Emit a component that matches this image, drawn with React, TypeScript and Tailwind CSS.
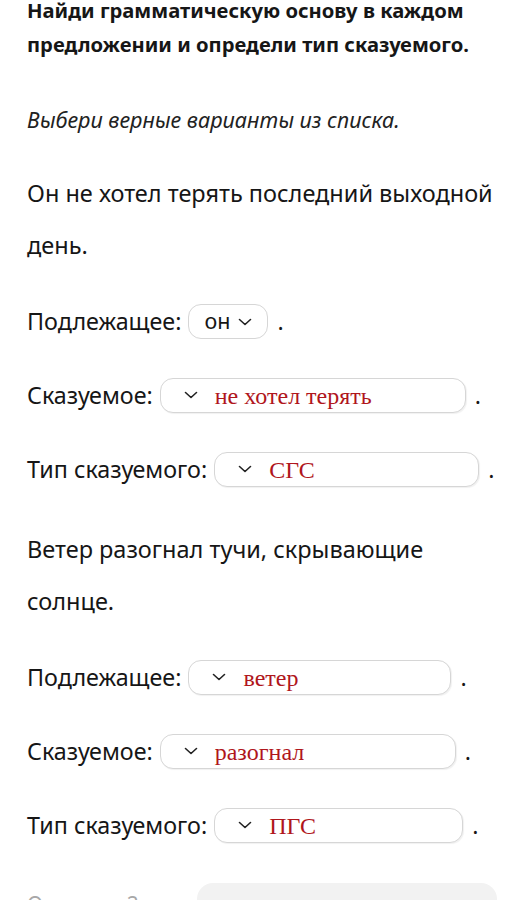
import React from "react";

function Chevron() {
  return (
    <svg width="14" height="8" viewBox="0 0 14 8" fill="none" className="shrink-0">
      <path d="M1.5 1.5 L7 6.5 L12.5 1.5" stroke="#222" strokeWidth="1.6" strokeLinecap="round" strokeLinejoin="round" />
    </svg>
  );
}

function FilledSelect({ value, width }: { value: string; width: number }) {
  return (
    <div
      className="ml-[7px] h-[35px] rounded-[13px] border-[1.5px] border-[#d6d6d6] bg-white flex items-center pl-[23px] shadow-[1px_1px_1px_rgba(0,0,0,0.06)]"
      style={{ width }}
    >
      <Chevron />
      <span className="ml-[17px] font-['Liberation_Serif',serif] text-[24px] leading-none text-[#b0161c] translate-y-[1px]">
        {value}
      </span>
    </div>
  );
}

function Row({ label, children }: { label: string; children: React.ReactNode }) {
  return (
    <div className="h-[74px] flex items-center">
      <span>{label}</span>
      {children}
      <span className="ml-[9px]">.</span>
    </div>
  );
}

export default function App() {
  return (
    <div className="w-[515px] h-[900px] overflow-hidden bg-white pl-[27px] font-['Noto_Sans',sans-serif] text-[#161616]">
      <div className="mt-[-7px] text-[20.2px] font-bold leading-[34px]">
        <div>Найди грамматическую основу в каждом</div>
        <div>предложении и определи тип сказуемого.</div>
      </div>
      <div className="mt-[44px] text-[21.6px] italic leading-[30px] text-[#222]">
        Выбери верные варианты из списка.
      </div>
      <div className="mt-[32px] text-[23.5px] leading-[52px]">
        <div>Он не хотел терять последний выходной</div>
        <div>день.</div>
      </div>
      <div className="mt-[13px] text-[23.3px]">
        <Row label="Подлежащее:">
          <div className="ml-[7px] h-[35px] w-[80px] rounded-[13px] border-[1.5px] border-[#d6d6d6] bg-white flex items-center pl-[15px] text-[21.5px]">
            <span className="leading-none">он</span>
            <span className="ml-[8px] mt-[2px]">
              <Chevron />
            </span>
          </div>
        </Row>
        <Row label="Сказуемое:">
          <FilledSelect value="не хотел терять" width={306} />
        </Row>
        <Row label="Тип сказуемого:">
          <FilledSelect value="СГС" width={265} />
        </Row>
      </div>
      <div className="mt-[17px] text-[23.5px] leading-[52px]">
        <div>Ветер разогнал тучи, скрывающие</div>
        <div>солнце.</div>
      </div>
      <div className="mt-[13px] text-[23.3px]">
        <Row label="Подлежащее:">
          <FilledSelect value="ветер" width={263} />
        </Row>
        <Row label="Сказуемое:">
          <FilledSelect value="разогнал" width={296} />
        </Row>
        <Row label="Тип сказуемого:">
          <FilledSelect value="ПГС" width={249} />
        </Row>
      </div>
      <div className="mt-[21px] flex items-start">
        <span className="mt-[6px] w-[170px] text-[21px] leading-[30px] text-[#a8a8a8]">Осталось 2</span>
        <div className="h-[60px] w-[300px] rounded-[16px] bg-[#f2f2f2]" />
      </div>
    </div>
  );
}
